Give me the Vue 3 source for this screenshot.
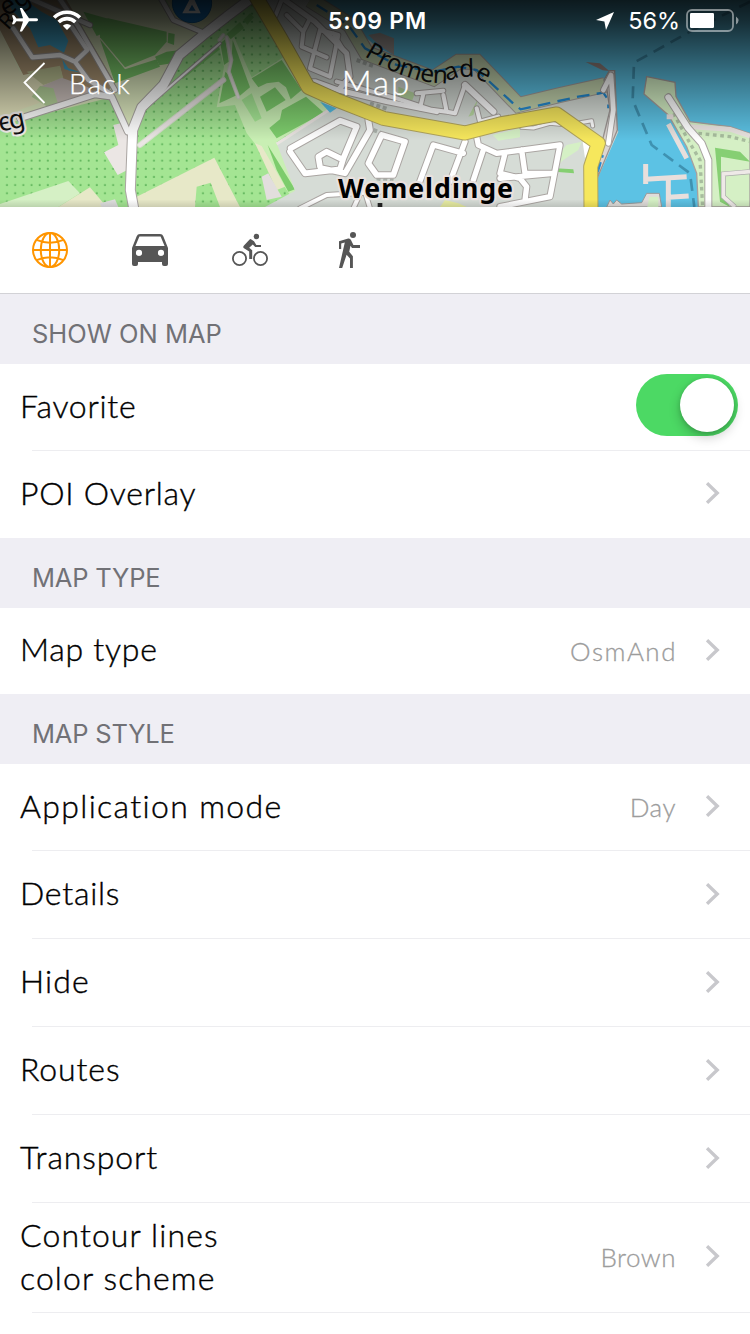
<script setup>
const woods = [
  'M300 62L325 55L500 95L500 125L465 165L375 202L300 112Z',
  'M250 35L330 58L300 70L310 100L290 108Z',
  'M505 98L524 102L522 135L503 128Z',
  'M465 170L500 155L540 150L515 190L478 196Z',
  'M300 118L375 208L470 178L480 200L345 250Z',
  'M540 225L650 135L660 148L548 238Z',
  'M680 102L720 66L732 84L692 118Z',
  'M730 60L750 40L762 52L742 74Z',
  'M661 130L676 118L686 185L672 195Z',
  'M676 215L684 222L710 286L658 310Z',
  'M698 120L750 262L716 290L692 215Z',
  'M755 235L845 180L905 270L872 298L858 262L836 245L800 250L775 262Z',
  'M780 290L825 262L857 300L800 335Z',
  'M846 330L918 290L972 338L830 415L808 384L840 358Z',
  'M803 435L885 568L865 575L830 510Z',
]
const roads = [
  { d: 'M55 -20L270 75M40 85L97 172L180 165L225 185L262 150L215 80M225 185L265 240L330 280', w: 13 },
  { d: 'M235 80L345 270M175 -10L235 80', w: 13 },
  { d: 'M60 355L285 283L335 290L383 395', w: 17 },
  { d: 'M480 -10L520 60L615 100', w: 13 },
  { d: 'M760 -10L680 50L610 105L538 165L490 255L425 322L398 390L391 570L402 630', w: 27 },
  { d: 'M658 120L670 105M680 112L694 180L686 215L715 292', w: 6, tint: true },
  { d: 'M420 435L670 240', w: 12, tint: true },
  { d: 'M430 330L515 255L660 130', w: 6 },
  { d: 'M840 -10L945 65L1040 160L1050 230L1015 270L1160 305L1310 335M1015 270L945 245L925 245', w: 15 },
  { d: 'M845 0L825 50M860 45L910 95L905 140L980 172M910 95L930 55', w: 12 },
  { d: 'M960 90L1015 105L990 230L930 205L960 90M1000 100L1030 150', w: 12 },
  { d: 'M1010 245L1190 295L1310 335M1270 282L1260 325L1340 335L1330 285M1340 335L1365 340L1395 255M1250 280L1330 272', w: 12 },
  { d: 'M1395 255L1480 335', w: 18 },
  { d: 'M872 445L1020 362L1070 380L1030 475L1020 508L915 520L870 455M960 500L955 470L980 455L1020 475M965 505L1035 520L1110 390L1105 360', w: 17 },
  { d: 'M1145 405L1215 425L1180 525L1130 525L1105 490L1145 405', w: 17 },
  { d: 'M1250 570L1300 435L1390 460M1395 425L1350 545M1430 410L1435 435L1490 460L1680 435L1650 590L1500 620M1450 450L1420 540M1515 460L1500 520L1560 535L1580 560L1575 600M1565 450L1575 520L1660 520M1500 535L1660 520', w: 16 },
  { d: 'M900 625L980 585L1140 575M1060 625L1090 560L1110 625', w: 12 },
  { d: 'M1430 325L1440 365L1495 350', w: 12 },
  { d: 'M1565 382L1600 384L1650 370L1700 375M1740 368L1775 362L1778 378', w: 9 },
  { d: 'M1810 270L1833 225L1840 330L1825 430', w: 14 },
  { d: 'M2005 292L2065 385L2105 430L2125 480L2125 630', w: 18 },
]
const rowGroups = [
  {
    title: 'Show on map',
    cls: 'g-show',
    rows: [
      { label: 'Favorite', cls: 'fav', toggle: true },
      { label: 'POI Overlay', cls: 'poi' },
    ],
  },
  { title: 'Map type', cls: 'g-type', rows: [{ label: 'Map type', cls: 'mtype', value: 'OsmAnd', vcls: 'v-osm' }] },
  {
    title: 'Map style',
    cls: 'g-style',
    rows: [
      { label: 'Application mode', cls: 'appmode', value: 'Day', vcls: 'v-day' },
      { label: 'Details', cls: 'details' },
      { label: 'Hide', cls: 'hide' },
      { label: 'Routes', cls: 'routes' },
      { label: 'Transport', cls: 'transport' },
      { label: 'Contour lines\ncolor scheme', cls: 'contour', value: 'Brown', vcls: 'v-brown' },
    ],
  },
]
</script>

<template>
  <main class="screen">
    <header class="hero">
      <svg class="map" viewBox="0 0 2250 621">
        <defs>
          <pattern id="dots" width="24.5" height="24.5" patternUnits="userSpaceOnUse" x="8" y="3">
            <rect x="10" y="10" width="6" height="6" rx="2" fill="#62b65d" />
          </pattern>
          <linearGradient id="shade" x1="0" y1="0" x2="0" y2="1">
            <stop offset="0" stop-color="#000" stop-opacity=".87" />
            <stop offset=".1" stop-color="#000" stop-opacity=".77" />
            <stop offset=".35" stop-color="#000" stop-opacity=".43" />
            <stop offset=".68" stop-color="#000" stop-opacity="0" />
          </linearGradient>
          <linearGradient id="edge" x1="0" y1="0" x2="0" y2="1">
            <stop offset="0" stop-color="#000" stop-opacity="0" />
            <stop offset="1" stop-color="#000" stop-opacity=".12" />
          </linearGradient>
          <path id="promenade" d="M1092 168Q1220 248 1330 250Q1375 228 1400 230Q1440 228 1500 285" />
        </defs>
        <rect width="2250" height="621" fill="#5cc2e4" />

        <!-- western fields and village -->
        <path d="M0 0H960L1010 621H0Z" fill="#a4e593" />
        <path d="M0 0H960L1010 621H0Z" fill="url(#dots)" />
        <path d="M0 0H480L620 100L530 160L430 320L385 395L340 290L0 375Z" fill="#dde9bf" />
        <path d="M0 90L60 215L150 250L200 280L0 350Z" fill="#e3e2bc" />
        <path d="M0 0H200L345 250L320 275L200 285L180 200L70 225L0 90Z" fill="#b19a78" />
        <path d="M80 215L180 197L190 235L130 255Z" fill="#c1c797" />
        <path d="M120 260L185 233L265 262L285 283L175 310Z" fill="#cdc2bd" />
        <path d="M95 290L120 258L160 265L175 315L145 322Z" fill="#b8d59d" />
        <path d="M20 0H75L125 35L170 60L205 122L192 158L150 135L115 142L90 85L40 35ZM187 178L205 205L245 218L210 212L193 207Z" fill="#46b0d8" />
        <path d="M610 0H748L680 50L620 90L530 60L500 0Z" fill="#cdd5aa" />
        <path d="M0 612L205 543L240 580L175 621H0Z" fill="#d5f0c5" />
        <path d="M175 621L270 562L320 621Z" fill="#e7e8c8" />
        <path d="M410 621V590L643 473L720 621H660L632 548L590 560L585 621Z" fill="#e7e8c8" />
        <path d="M340 375L362 370L388 400L382 510L353 525L312 457L355 435Z" fill="#ebe6e4" />
        <path d="M300 610L345 598L355 621H305Z" fill="#dfdfdf" />
        <path d="M690 100L700 105L755 232L850 172L905 262L990 325L830 425L895 570L870 585L780 450L740 400L705 315L650 322L672 200L655 130Z" fill="#c9efb4" />
        <path d="M725 300L755 280L785 355L765 365Z" fill="#a4e593" />
        <path d="M765 430L785 438L855 560L830 570Z" fill="#e7e8c8" />
        <path d="M785 530L805 520L845 590L800 600Z" fill="#e2dedd" />
        <path v-for="d in woods" :key="d" :d="d" fill="#7dcc6c" />

        <!-- town and harbour quay -->
        <path d="M780 0H940L1060 80L1130 140L1300 225L1395 190L1560 320L1820 260L1855 395L1793 535V621H795L885 572L830 430L990 325L910 260Z" fill="#d6dcd6" />
        <path d="M830 432L990 328" stroke="#e9e3e0" stroke-width="9" />
        <path d="M930 0L1050 75L1100 160L1300 235L1375 185L1430 185L1555 315L1680 285L1815 255" fill="none" stroke="#a39c99" stroke-width="48" />
        <path d="M930 0L1050 75L1100 160L1300 235L1375 185L1430 185L1555 315L1680 285L1815 255" fill="none" stroke="#c3d3ad" stroke-width="42" />
        <path d="M1105 105L1140 98L1182 115V165L1140 138Z" fill="#a39c98" />
        <path d="M950 15L1045 75L1095 145L1190 195L1300 215L1375 200L1430 210L1545 315L1562 328L1735 290L1810 278L1825 300V325" fill="none" stroke="#258bd2" stroke-width="7" stroke-dasharray="38 22" />
        <path d="M1757 186L1800 190L1828 213L1808 211Z" fill="#92827e" />
        <path d="M1812 240L1828 212H1844L1852 390L1793 532L1800 450L1830 330L1820 265Z" fill="#dcd6d3" stroke="#9b9492" stroke-width="4" />
        <path d="M960 305L1010 325L990 338Z" fill="#52bce3" />
        <path d="M1195 260L1245 280L1230 318L1195 310ZM1405 350L1435 295L1420 345Z" fill="#bad9a2" />
        <path d="M1478 405L1560 385V412L1495 422ZM1700 435L1745 425L1735 450L1690 480L1665 505L1670 470Z" fill="#d5f0c5" />
        <path d="M1665 505L1720 508L1722 520L1665 515Z" fill="#85cf71" />
        <path d="M1320 621L1335 600L1375 610L1400 621Z" fill="#e7eca2" />
        <path d="M1060 255l50 14M1070 180l55 20M1110 310l50 16M1120 390l22 8M1130 535l50 8" stroke="#aab0aa" stroke-width="12" stroke-dasharray="12 8" />

        <!-- eastern pier -->
        <path d="M1940 230L2025 247L2028 290L2070 365L2190 380L2250 400V621H2095L2090 520L2060 440L2005 345L1932 282Z" fill="#d5f0c5" stroke="#a8a09e" stroke-width="4" />
        <path d="M2065 380L2190 388L2250 408" fill="none" stroke="#e9e3e0" stroke-width="14" />
        <path d="M2145 443L2220 455L2250 485L2163 470V570L2190 621L2160 605Z" fill="#86cf73" />
        <path d="M2250 515L2170 522V590L2205 621" fill="none" stroke="#aaa" stroke-width="15" />
        <path d="M2250 515L2170 522V590L2205 621" fill="none" stroke="#eee9e7" stroke-width="11" />
        <path d="M2020 340L2070 430L2100 480L2108 621M2095 400L2190 410L2250 425" fill="none" stroke="#a8bd9e" stroke-width="10" stroke-dasharray="11 11" />
        <path d="M2005 372L2060 475M1937 492V552M1937 538L2060 530M2005 540V621M2005 592L2066 588M2000 350L2020 350" fill="none" stroke="#e8dfdc" stroke-width="15" />
        <path d="M1820 621L1830 600L1840 612L1850 600L1865 612L1925 608L1940 580H1978L1985 621Z" fill="#e0ddda" stroke="#999" stroke-width="3" />
        <path d="M1948 590H1975V621H1942Z" fill="#d5f0c5" />
        <path d="M2250 5L2070 95L1902 188L1898 300L1955 435L2070 520L2083 621" fill="none" stroke="#2b718f" stroke-opacity=".6" stroke-width="8" stroke-dasharray="36 22" />

        <!-- street network: casings first, then fills -->
        <g fill="none" stroke-linejoin="round" stroke-linecap="round">
          <path v-for="r in roads" :key="'c' + r.d" :d="r.d" :stroke-width="r.w + 6" :stroke="r.tint ? '#d7dfcd' : '#aaa5a2'" />
          <path v-for="r in roads" :key="r.d" :d="r.d" :stroke-width="r.w" :stroke="r.tint ? '#ebe6e4' : '#fff'" />
        </g>
        <path d="M1748 425L1775 435L1755 475Z" fill="#fff" />
        <path d="M1793 515L1808 465" stroke="#258bd2" stroke-width="8" stroke-dasharray="30 14" />
        <g fill="none" stroke-linejoin="round">
          <path d="M762 -20L842 115L925 262L1010 300L1150 355L1395 399L1500 372L1670 342L1795 430L1772 500L1773 630" stroke="#b2a55e" stroke-width="45" />
          <path d="M762 -20L842 115L925 262L1010 300L1150 355L1395 399L1500 372L1670 342L1795 430L1772 500L1773 630" stroke="#f6e75c" stroke-width="39" />
        </g>

        <circle cx="576" cy="9" r="59" fill="#1678c5" stroke="#12619d" stroke-width="3" />
        <path fill-rule="evenodd" d="M570 -4H582L602 40H547ZM576 14L566 32H587Z" fill="#fff" />

        <g class="map-text">
          <text x="0" y="395" font-size="78" transform="rotate(-12 0 395)" class="halo" textLength="80">eg</text>
          <text x="18" y="50" font-size="78" transform="rotate(-32 18 50)">eg</text>
          <text x="24" y="92" font-size="66" transform="rotate(-48 24 92)">R</text>
          <text font-size="73"><textPath href="#promenade" textLength="392">Promenade</textPath></text>
        </g>
        <rect width="2250" height="621" fill="url(#shade)" />
        <text x="1014" y="593" font-size="80" textLength="525" class="town">Wemeldinge</text>
        <rect x="1133" y="609" width="14" height="12" fill="#222" />
        <rect y="598" width="2250" height="23" fill="url(#edge)" />
      </svg>

      <div class="chrome">
        <div class="status">
          <svg class="signals" viewBox="0 0 72 26">
            <path d="M27 11.8C27 13 26 13.3 24 13.3H18L11 23.5H8.8L12 13.4L5.5 13.2L3 16.3H1L2.4 11.8L1 7.3H3L5.5 10.4L12 10.2L8.8 0H11L18 10.3H24C26 10.3 27 10.7 27 11.8Z" />
            <path d="M56 22L51.8 17.7A6.2 6.2 0 0 1 60.2 17.7Z" />
            <g fill="none" stroke="#fff" stroke-width="3.6">
              <path d="M47.7 14A11.8 11.8 0 0 1 64.3 14" />
              <path d="M43.1 9.6A18.2 18.2 0 0 1 68.9 9.6" />
            </g>
          </svg>
          <span class="clock">5:09 PM</span>
          <div class="power">
            <svg class="arrow" viewBox="0 0 18 18"><path d="M18 0L10 18L8.4 9.6L0 8Z" /></svg>
            <span class="percent">56%</span>
            <svg class="battery" viewBox="0 0 53 23">
              <rect x="1" y="1" width="46" height="21" rx="5" fill="none" stroke="#fff" stroke-opacity=".48" stroke-width="1.8" />
              <rect x="4" y="4" width="24" height="15" rx="1.2" />
              <path d="M50 7.5Q55 11.5 50 15.5Z" fill-opacity=".5" />
            </svg>
          </div>
        </div>
        <nav class="navbar">
          <svg class="back-icon" viewBox="0 0 23 42"><path d="M21.5 1L1.5 20.5L21.5 41" /></svg>
          <span class="back">Back</span>
          <span class="title">Map</span>
        </nav>
      </div>
    </header>

    <div class="tabs">
      <svg class="globe" viewBox="0 0 36 36">
        <circle cx="18" cy="18" r="17" />
        <ellipse cx="18" cy="18" rx="9.2" ry="17" />
        <path d="M18 1V35M1 18H35M4.5 7.8Q18 13.5 31.5 7.8M4.5 28.2Q18 22.5 31.5 28.2" />
      </svg>
      <svg viewBox="0 0 36 36">
        <path fill-rule="evenodd" d="M8 2H28Q30.5 2 31.3 4.2L36 16V32Q36 34 34 34H32Q30 34 30 32V30H6V32Q6 34 4 34H2Q0 34 0 32V16L4.7 4.2Q5.5 2 8 2ZM7.4 4.5L3.4 14H32.6L28.6 4.5ZM7 17.8A3.1 3.1 0 1 0 7 24A3.1 3.1 0 1 0 7 17.8ZM29 17.8A3.1 3.1 0 1 0 29 24A3.1 3.1 0 1 0 29 17.8Z" />
      </svg>
      <svg viewBox="0 0 36 36">
        <circle cx="24.4" cy="4.5" r="2.7" />
        <g fill="none" stroke="#565656" stroke-width="1.8">
          <circle cx="7.5" cy="26.5" r="6.6" />
          <circle cx="28.5" cy="26.5" r="6.6" />
        </g>
        <path d="M18.6 7L22 9.2L24.3 13H29V15H23.2L20.8 12.6L17.2 15.8L20.2 18.2V27H17.2V19.6L12 16.3Q10.5 15 12 13.4L17.6 7.6Z" />
      </svg>
      <svg viewBox="0 0 36 36">
        <circle cx="21" cy="3" r="3" />
        <path d="M7 9.3L16.2 6.6Q18.3 6.3 19.1 8.2L21.4 13H28V16H20L18.5 13.7L17.2 19.8L20.9 24.2V36H18V26.6L14.6 22.7L10.2 36H7L12.8 10.4L9.2 11.5V17H7Z" />
      </svg>
    </div>

    <section v-for="g in rowGroups" :key="g.title" :class="['group', g.cls]">
      <h2><span>{{ g.title }}</span></h2>
      <div class="rows">
        <div v-for="r in g.rows" :key="r.label" :class="['row', r.cls]">
          <span class="label">{{ r.label }}</span>
          <span v-if="r.toggle" class="switch"><span class="knob"></span></span>
          <template v-else>
            <span v-if="r.value" :class="['value', r.vcls]">{{ r.value }}</span>
            <svg class="chevron" viewBox="0 0 14 22"><path d="M1 1.2L11.2 11L1 20.8" /></svg>
          </template>
        </div>
      </div>
    </section>
  </main>
</template>

<style>
html, body { background: #fff; overflow: hidden; }
</style>

<style scoped>
.screen { width: 750px; height: 1334px; overflow: hidden; background: #fff; font-family: Lato, sans-serif; font-variant-ligatures: none; color: #000; }
.hero { position: relative; height: 207px; overflow: hidden; }
.map { display: block; width: 750px; height: 207px; }
.map-text { font-family: "Noto Sans", sans-serif; fill: #111; }
.halo { paint-order: stroke; stroke: #f3eeeb; stroke-width: 13px; stroke-linejoin: round; }
.town { font-family: "Noto Sans", sans-serif; font-weight: 700; fill: #000; paint-order: stroke; stroke: #e9e1de; stroke-width: 13px; stroke-linejoin: round; }
.chrome { position: absolute; inset: 0; color: #fff; }
.status { display: grid; grid-template-columns: 1fr auto 1fr; align-items: center; height: 41px; padding: 0 11px; fill: #fff; font-family: Inter, sans-serif; }
.signals { width: 72px; height: 26px; margin-top: 1px; }
.clock { font-size: 23px; font-weight: 600; letter-spacing: .75px; padding-left: 5px; }
.power { display: flex; align-items: center; justify-content: flex-end; }
.arrow { width: 18px; height: 18px; margin-right: 14px; }
.percent { font-size: 23.5px; margin-right: 6px; letter-spacing: -.1px; }
.battery { width: 53px; height: 23px; }
.navbar { display: grid; grid-template-columns: 23px 1fr auto 1fr; align-items: center; height: 84px; padding: 0 46px 0 23px; box-sizing: border-box; font-weight: 300; }
.back-icon { width: 23px; height: 42px; fill: none; stroke: #fff; stroke-width: 1.8; }
.back { font-size: 28px; padding-left: 23px; letter-spacing: 1.1px; -webkit-text-stroke: .25px #fff; }
.title { font-size: 33px; letter-spacing: 2px; padding: 0 0 3px 3px; -webkit-text-stroke: .3px #fff; }
.tabs { display: flex; gap: 64px; height: 86px; align-items: center; padding: 0 32px; border-bottom: 1px solid #d2d2d6; }
.tabs svg { width: 36px; height: 36px; fill: #565656; }
.tabs .globe { fill: none; stroke: #ff9500; stroke-width: 2; }
h2 { display: flex; align-items: center; height: 70px; margin: 0; padding: 10px 0 0 32px; box-sizing: border-box; background: #efeef4; color: #717176; font: 400 25.5px/1 Inter, sans-serif; text-transform: uppercase; }
.g-type h2, .g-style h2 { letter-spacing: -.2px; }
.row { position: relative; display: flex; align-items: center; height: 88px; box-sizing: border-box; padding: 0 30px 3px 20px; }
.row:first-child { height: 87px; }
.row:last-child:not(:first-child) { height: 87px; }
.row:first-child:last-child { height: 86px; }
.row::after { content: ""; position: absolute; left: 32px; right: 0; bottom: 0; height: 1px; background: #ededf0; }
.g-show .row:last-child::after, .g-type .row::after { display: none; }
.row.contour, .row.contour:last-child:not(:first-child) { height: 110px; padding-bottom: 2px; }
.label { flex: 1; font-size: 32px; font-weight: 300; line-height: 43px; white-space: pre-line; letter-spacing: .75px; padding-bottom: 2px; -webkit-text-stroke: .4px #000; }
.appmode .label { letter-spacing: 1.35px; }
.hide .label, .contour .label { letter-spacing: 1.1px; }
.routes .label, .transport .label { letter-spacing: .9px; }
.value { font-size: 26px; font-weight: 300; color: #9c9c9c; margin-right: 30px; padding-top: 2px; letter-spacing: .5px; -webkit-text-stroke: .3px #9c9c9c; }
.v-osm { letter-spacing: 1.5px; margin-right: 29px; }
.chevron { width: 14px; height: 22px; fill: none; stroke: #c8c8cc; stroke-width: 3.4; }
.contour .chevron, .contour .value { margin-bottom: 2px; }
.fav { padding-right: 12px; }
.switch { width: 102px; height: 62px; border-radius: 31px; background: #4cd964; display: flex; justify-content: flex-end; padding: 4px; box-sizing: border-box; margin-bottom: 3px; }
.knob { width: 54px; height: 54px; border-radius: 50%; background: #fff; box-shadow: 0 5px 12px rgba(0, 0, 0, .22), 0 1px 4px rgba(0, 0, 0, .15); }
</style>
